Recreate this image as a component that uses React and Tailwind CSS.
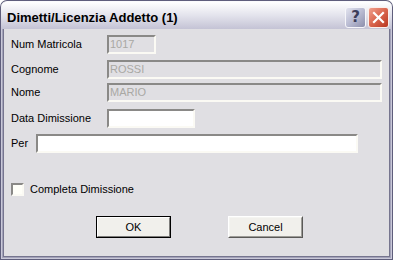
import React from "react";

const font = { fontFamily: '"Liberation Sans", Arial, sans-serif' };

function Field({ w, value, disabled }) {
  return (
    <div
      className={`h-[19px] border-2 border-t-[#8a8987] border-l-[#8a8987] border-b-[#fbfaf4] border-r-[#fbfaf4] flex items-center pl-[1px] text-[11px] leading-none ${
        disabled ? "bg-[#e0dfe3] text-[#a9a8a4]" : "bg-white text-black"
      }`}
      style={{ width: w }}
    >
      {value}
    </div>
  );
}

function Row({ label, labelW, children, mt }) {
  return (
    <div className={`flex items-center ${mt}`}>
      <div className="text-[11px] text-black leading-none pl-[7px]" style={{ width: labelW }}>
        {label}
      </div>
      {children}
    </div>
  );
}

export default function App() {
  return (
    <div
      className="w-[393px] h-[260px] flex flex-col bg-[#5f5e7c] rounded-t-[7px] overflow-hidden p-px"
      style={font}
    >
      {/* title bar */}
      <div className="h-[28px] shrink-0 flex items-center rounded-t-[6px] bg-gradient-to-b from-[#ffffff] via-[#e3e3ec] to-[#c4c3d5] border-t border-[#fbfbfd]">
        <div className="pl-[6px] text-[13px] font-bold text-black leading-none flex-1 pt-[3px]">
          Dimetti/Licenzia Addetto (1)
        </div>
        <div className="flex gap-[2px] pr-[3px] pt-[3px]">
          <div className="w-[21px] h-[21px] rounded-[3px] border border-[#f6f6fa] bg-gradient-to-br from-[#e3e4ef] via-[#b9bbd2] to-[#8d8fac] flex items-center justify-center">
            <span className="text-[15px] font-bold text-[#3c3d5a] leading-none" style={{ fontFamily: '"DejaVu Sans", sans-serif' }}>
              ?
            </span>
          </div>
          <div className="w-[21px] h-[21px] rounded-[3px] border border-[#fbeeea] bg-gradient-to-br from-[#f0a08e] via-[#d9644d] to-[#b8341f] flex items-center justify-center">
            <svg width="13" height="13" viewBox="0 0 13 13">
              <path d="M2 2 L11 11 M11 2 L2 11" stroke="white" strokeWidth="2.2" strokeLinecap="square" />
            </svg>
          </div>
        </div>
      </div>

      {/* frame */}
      <div className="flex-1 flex flex-col border-x border-b border-[#cac9d9]">
        <div className="flex-1 flex flex-col border-x border-b border-[#a3a2b9]">
          <div className="flex-1 flex flex-col border-x border-b border-[#76758f] bg-[#e0dfe3]">
            <div className="flex flex-col pt-[6px]">
              <Row label="Num Matricola" labelW={103} mt="">
                <Field w={49} value="1017" disabled />
              </Row>
              <Row label="Cognome" labelW={103} mt="mt-[6px]">
                <Field w={275} value="ROSSI" disabled />
              </Row>
              <Row label="Nome" labelW={103} mt="mt-[4px]">
                <Field w={275} value="MARIO" disabled />
              </Row>
              <Row label="Data Dimissione" labelW={103} mt="mt-[7px]">
                <Field w={88} value="" />
              </Row>
              <Row label="Per" labelW={32} mt="mt-[6px]">
                <Field w={322} value="" />
              </Row>

              <div className="flex items-center mt-[30px] pl-[7px]">
                <div className="w-[13px] h-[13px] border-2 border-t-[#8a8987] border-l-[#8a8987] border-b-[#fbfaf4] border-r-[#fbfaf4] bg-[#fffff9]" />
                <span className="ml-[6px] text-[11px] leading-none text-black">Completa Dimissione</span>
              </div>

              <div className="flex mt-[20px] pl-[92px] gap-[57px]">
                <div className="w-[75px] h-[22px] border border-black">
                  <div className="w-full h-full border border-t-white border-l-white border-b-[#7d7c7a] border-r-[#7d7c7a] bg-[#f1f0ec] flex items-center justify-center text-[11px] text-black leading-none">
                    OK
                  </div>
                </div>
                <div className="w-[75px] h-[22px] border border-t-white border-l-white border-b-[#5a5957] border-r-[#5a5957]">
                  <div className="w-full h-full border border-t-[#f5f5f2] border-l-[#f5f5f2] border-b-[#9d9c98] border-r-[#9d9c98] bg-[#f1f0ec] flex items-center justify-center text-[11px] text-black leading-none">
                    Cancel
                  </div>
                </div>
              </div>
            </div>
          </div>
        </div>
      </div>
    </div>
  );
}
